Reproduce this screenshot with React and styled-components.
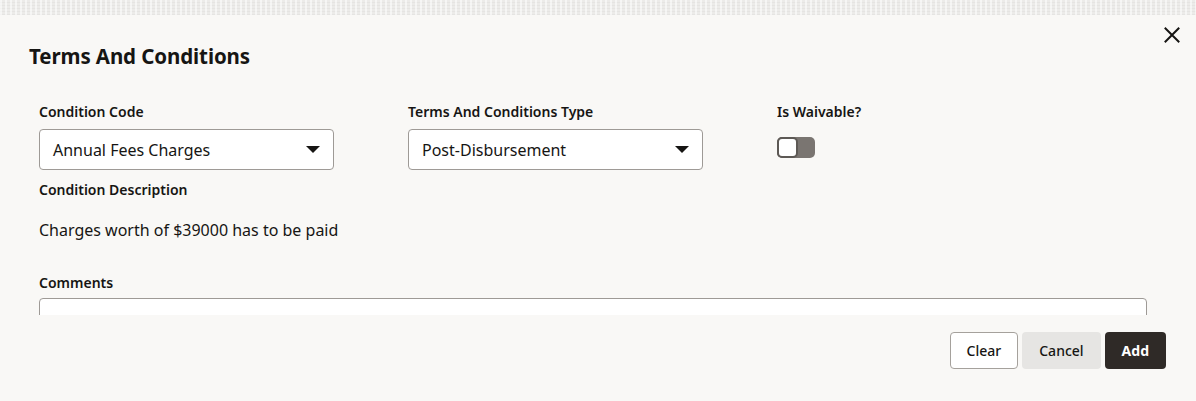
import React, { useState } from 'react';
import styled, { createGlobalStyle } from 'styled-components';

const GlobalStyle = createGlobalStyle`
  html, body {
    margin: 0;
    padding: 0;
    background: #f9f8f6;
    font-family: "Noto Sans", "Open Sans", sans-serif;
    color: #161513;
  }
  * {
    box-sizing: border-box;
  }
`;

const Page = styled.div`
  width: 1196px;
  height: 401px;
  display: flex;
  flex-direction: column;
  overflow: hidden;
`;

const TopStrip = styled.div`
  height: 15px;
  flex: none;
  background-color: #ecebe9;
  background-image: repeating-linear-gradient(
      90deg,
      rgba(255, 255, 255, 0.55) 0 2px,
      transparent 2px 5px
    ),
    repeating-linear-gradient(0deg, rgba(0, 0, 0, 0.03) 0 1px, transparent 1px 3px);
`;

const Dialog = styled.div`
  flex: 1;
  display: flex;
  flex-direction: column;
  background: #f9f8f6;
`;

const Header = styled.div`
  display: flex;
  justify-content: space-between;
  align-items: flex-start;
  padding: 10px 14px 0 29px;
  height: 75px;
`;

const Title = styled.h1`
  margin: 17px 0 0;
  font-size: 20.5px;
  line-height: 28px;
  font-weight: 700;
  letter-spacing: -0.1px;
`;

const CloseButton = styled.button`
  border: none;
  background: none;
  padding: 0;
  width: 20px;
  height: 20px;
  display: flex;
  align-items: center;
  justify-content: center;
  cursor: pointer;
`;

const Body = styled.div`
  height: 225px;
  overflow: hidden;
  padding: 12px 50px 0 39px;
`;

const Row = styled.div`
  display: grid;
  grid-template-columns: 295px 295px 295px;
  column-gap: 74px;
`;

const Field = styled.div`
  display: flex;
  flex-direction: column;
  margin-top: ${(p) => p.$top || 0}px;
`;

const Label = styled.label`
  font-size: 14px;
  line-height: 20px;
  font-weight: 600;
  margin-bottom: ${(p) => (p.$gap === undefined ? 7 : p.$gap)}px;
`;

const SelectBox = styled.div`
  height: 41px;
  border: 1px solid #9e9a96;
  border-radius: 4px;
  background: #fff;
  display: flex;
  align-items: center;
  justify-content: space-between;
  padding: 0 12px 0 13px;
  font-size: 16px;
`;

const Caret = styled.span`
  width: 0;
  height: 0;
  border-left: 7px solid transparent;
  border-right: 7px solid transparent;
  border-top: 7px solid #161513;
  margin-right: 1px;
`;

const Switch = styled.button`
  width: 38px;
  height: 21px;
  margin-top: 8px;
  padding: 0;
  border: none;
  border-radius: 5px;
  background: ${(p) => (p.$on ? '#227e9e' : '#7a7571')};
  display: flex;
  align-items: center;
  justify-content: ${(p) => (p.$on ? 'flex-end' : 'flex-start')};
  cursor: pointer;
`;

const Knob = styled.span`
  width: 21px;
  height: 21px;
  border: 2px solid #5d5955;
  border-radius: 5px;
  background: #fff;
`;

const Description = styled.div`
  font-size: 16px;
  line-height: 24px;
  margin: 18px 0 31px;
`;

const Comments = styled.textarea`
  width: 1108px;
  height: 80px;
  border: 1px solid #9e9a96;
  border-radius: 4px;
  background: #fff;
  resize: none;
  font-family: inherit;
  font-size: 16px;
  padding: 8px 12px;
  margin-top: -2px;
`;

const Footer = styled.div`
  display: flex;
  justify-content: flex-end;
  gap: 4px;
  padding: 17px 30px 0 0;
`;

const Button = styled.button`
  height: 37px;
  padding: 0 ${(p) => p.$pad || 16}px;
  border-radius: 4px;
  font-family: inherit;
  font-size: 14px;
  font-weight: ${(p) => (p.$variant === 'primary' ? 700 : 500)};
  cursor: pointer;
  border: 1px solid
    ${(p) => (p.$variant === 'outline' ? '#a5a19c' : 'transparent')};
  background: ${(p) =>
    p.$variant === 'primary'
      ? '#2f2a27'
      : p.$variant === 'soft'
      ? '#e6e5e3'
      : '#fff'};
  color: ${(p) => (p.$variant === 'primary' ? '#fff' : '#161513')};
`;

export default function App() {
  const [waivable, setWaivable] = useState(false);

  return (
    <>
      <GlobalStyle />
      <Page>
        <TopStrip />
        <Dialog>
          <Header>
            <Title>Terms And Conditions</Title>
            <CloseButton aria-label="Close">
              <svg width="16" height="16" viewBox="0 0 16 16">
                <path
                  d="M1.5 1.5 L14.5 14.5 M14.5 1.5 L1.5 14.5"
                  stroke="#161513"
                  strokeWidth="2"
                  strokeLinecap="square"
                />
              </svg>
            </CloseButton>
          </Header>

          <Body>
            <Row>
              <Field>
                <Label>Condition Code</Label>
                <SelectBox>
                  Annual Fees Charges
                  <Caret />
                </SelectBox>
              </Field>
              <Field>
                <Label>Terms And Conditions Type</Label>
                <SelectBox>
                  Post-Disbursement
                  <Caret />
                </SelectBox>
              </Field>
              <Field>
                <Label>Is Waivable?</Label>
                <Switch $on={waivable} onClick={() => setWaivable(!waivable)}>
                  <Knob />
                </Switch>
              </Field>
            </Row>

            <Field $top={10}>
              <Label $gap={0}>Condition Description</Label>
              <Description>Charges worth of $39000 has to be paid</Description>
            </Field>

            <Field>
              <Label>Comments</Label>
              <Comments />
            </Field>
          </Body>

          <Footer>
            <Button $variant="outline">Clear</Button>
            <Button $variant="soft">Cancel</Button>
            <Button $variant="primary">Add</Button>
          </Footer>
        </Dialog>
      </Page>
    </>
  );
}
